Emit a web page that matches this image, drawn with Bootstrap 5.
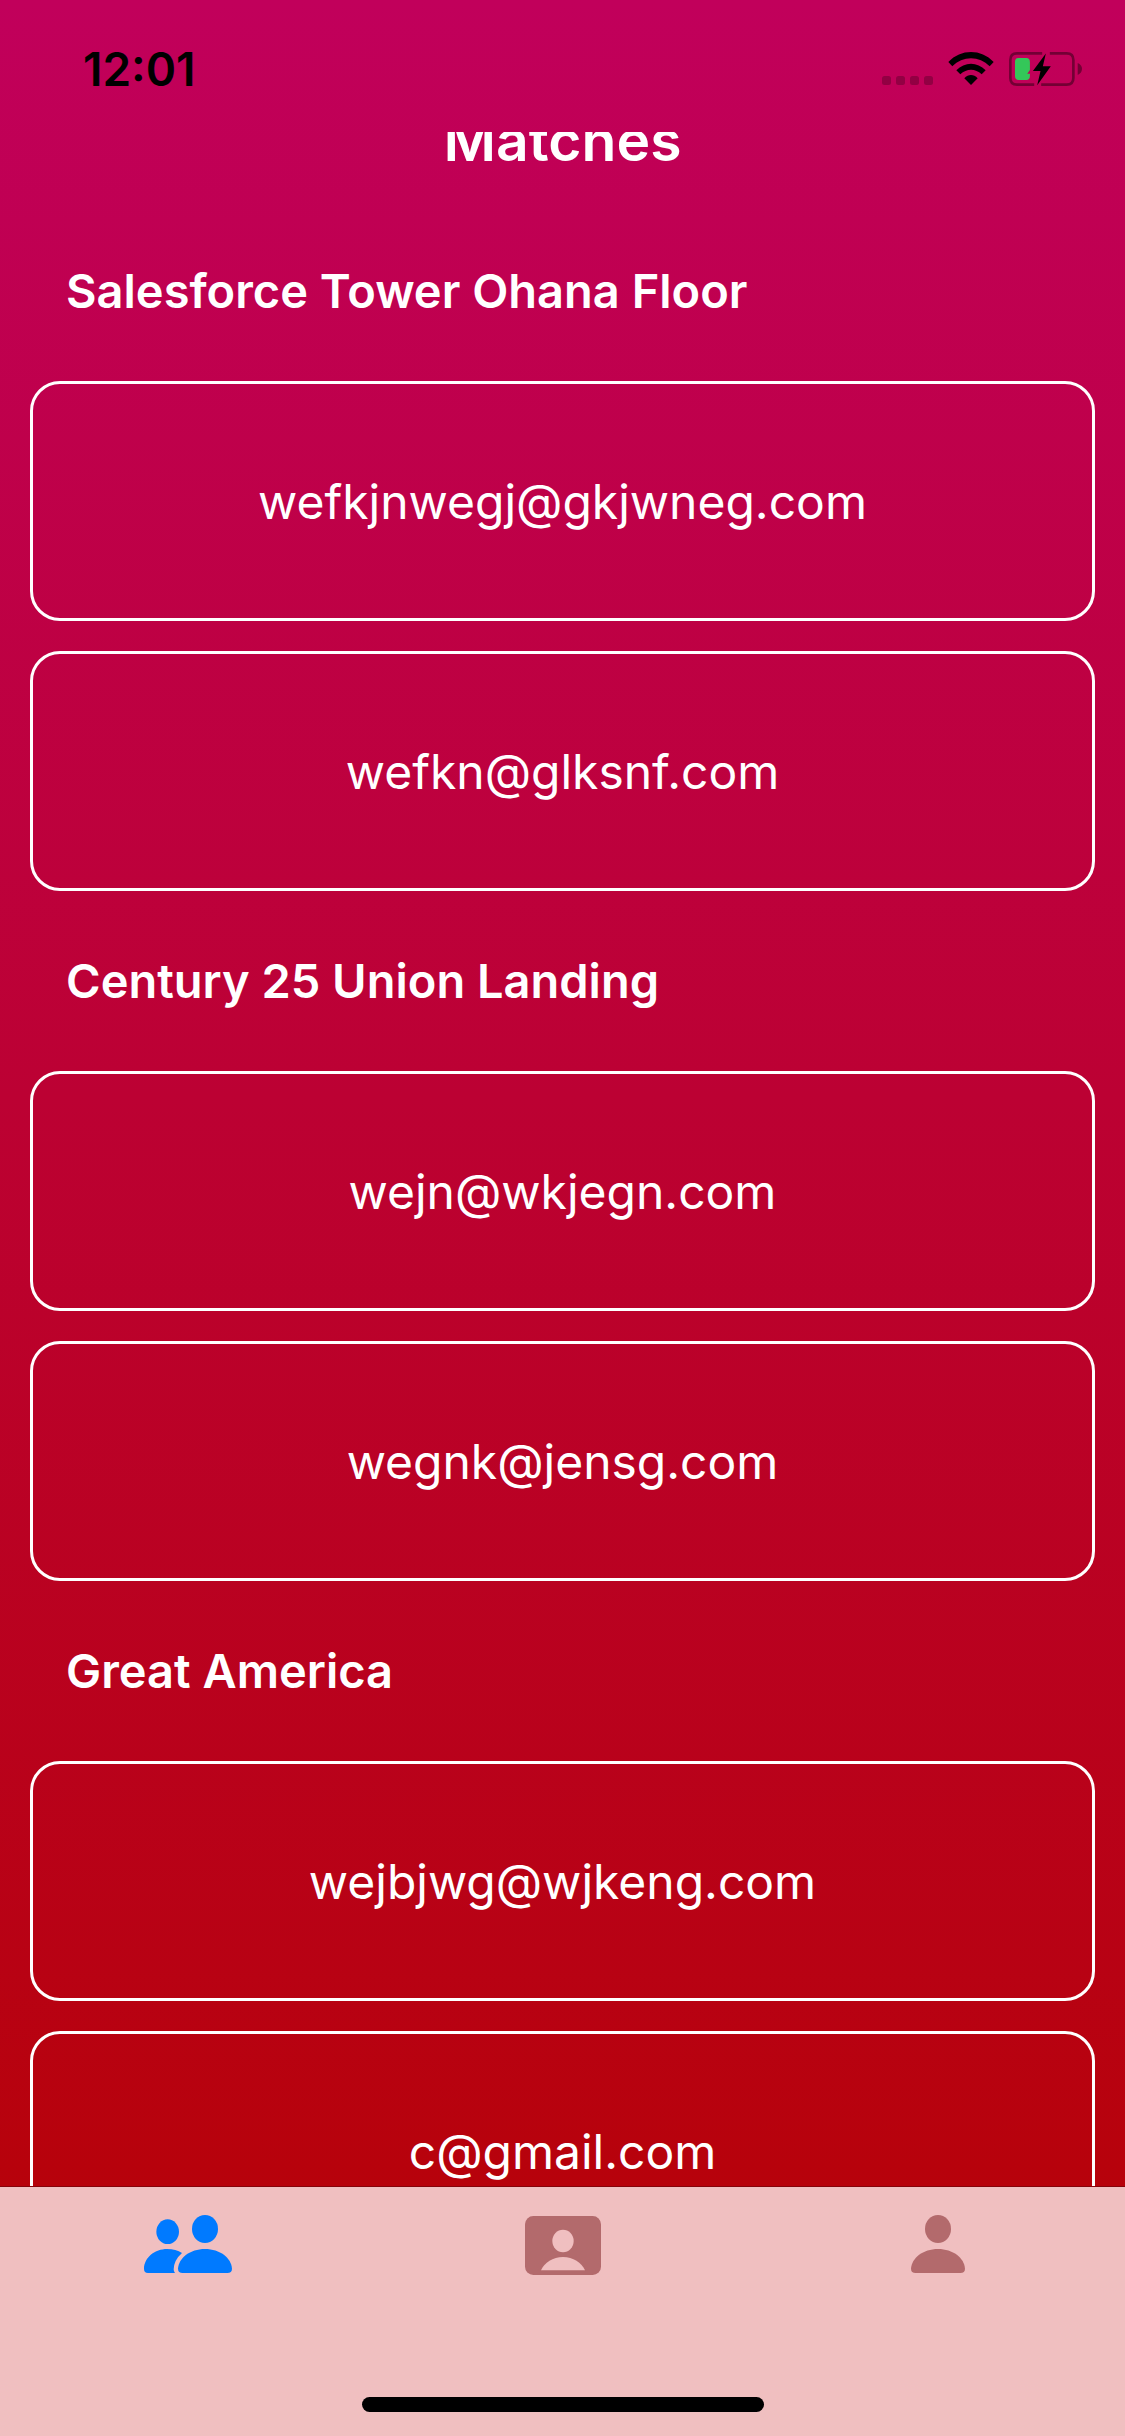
<!DOCTYPE html>
<html lang="en">
<head>
<meta charset="utf-8">
<meta name="viewport" content="width=device-width, initial-scale=1">
<title>Matches</title>
<link href="https://cdn.jsdelivr.net/npm/bootstrap@5.3.0/dist/css/bootstrap.min.css" rel="stylesheet">
<style>
  body { font-family: Inter, "Liberation Sans", sans-serif; background: #b7030a; }
  .app-screen { background: linear-gradient(180deg, #c1005b 0%, #b7020b 90%); }
  .status-bar { height: 132px; padding: 6px 43px 0 83px; }
  .status-time { font-size: 46px; font-weight: 600; line-height: 54px; }
  .status-icons { gap: 15px; height: 34px; }
  .match-list { min-height: 0; }
  .page-title { font-size: 57px; font-weight: 600; line-height: 120px; margin: -51px 0 0; }
  .place-name { font-size: 47px; font-weight: 600; line-height: 60px; padding: 60px 36px; margin: 0; }
  .match-stack { gap: 30px; }
  .match-card { min-height: 240px; border: 3px solid #fff; border-radius: 30px; background: transparent; color: #fff; font-size: 48px; line-height: 60px; padding-top: 2px; }
  .list-inset { padding: 0 30px; }
  .tab-bar { height: 250px; background: #f0bfc0; border-top: 1px solid #850309; padding-bottom: 24px; }
  .tab-link { color: #b36a6c; padding: 28px 0; }
  .tab-link.active { color: #007aff; }
  .home-indicator { width: 402px; height: 15px; background: #000; }
</style>
<script src="https://cdn.jsdelivr.net/npm/bootstrap@5.3.0/dist/js/bootstrap.bundle.min.js"></script>
</head>
<body>
<div class="app-screen vh-100 d-flex flex-column overflow-hidden">
  <header class="status-bar flex-shrink-0 d-flex justify-content-between align-items-center text-black">
    <span class="status-time">12:01</span>
    <div class="status-icons d-flex align-items-end">
      <svg width="51" height="10" viewBox="0 0 51 10" fill="#000" fill-opacity=".24" aria-label="No signal">
        <rect width="9" height="9" rx="2.5"/><rect x="14" width="9" height="9" rx="2.5"/><rect x="28" width="9" height="9" rx="2.5"/><rect x="42" width="9" height="9" rx="2.5"/>
      </svg>
      <svg width="46" height="34" viewBox="295 66 136 102" aria-label="Wi-Fi">
        <path d="M295 96C333 56 393 56 431 96L419 109C388 77 338 77 307 109Z"/>
        <path d="M319 121C344 95 382 95 407 121L395 133C376 115 350 115 331 133Z"/>
        <path d="M343 145C355 132 371 132 383 145L363 165Z"/>
      </svg>
      <svg width="73" height="34" viewBox="477 66 220 102" aria-label="Battery charging">
        <path d="M577 70H501Q481 70 481 90V144Q481 164 501 164H553M600 70H651Q671 70 671 90V144Q671 164 651 164H574" fill="none" stroke="#000" stroke-opacity=".4" stroke-width="8"/>
        <path d="M684 99Q697 105 697 117T684 135Z" fill-opacity=".4"/>
        <path d="M506 84H529Q540 84 540 96V120L532 131H540V138Q540 150 529 150H506Q495 150 495 138V96Q495 84 506 84Z" fill="#34c759"/>
        <path d="M588 70L549 123H572L562 166L603 109H579Z"/>
      </svg>
    </div>
  </header>

  <main class="match-list flex-grow-1 overflow-hidden list-inset text-white">
    <h1 class="page-title text-center">Matches</h1>
    <section>
      <h2 class="place-name">Salesforce Tower Ohana Floor</h2>
      <div class="match-stack d-flex flex-column">
        <div class="card match-card justify-content-center align-items-center">wefkjnwegj@gkjwneg.com</div>
        <div class="card match-card justify-content-center align-items-center">wefkn@glksnf.com</div>
      </div>
    </section>
    <section>
      <h2 class="place-name">Century 25 Union Landing</h2>
      <div class="match-stack d-flex flex-column">
        <div class="card match-card justify-content-center align-items-center">wejn@wkjegn.com</div>
        <div class="card match-card justify-content-center align-items-center">wegnk@jensg.com</div>
      </div>
    </section>
    <section>
      <h2 class="place-name">Great America</h2>
      <div class="match-stack d-flex flex-column">
        <div class="card match-card justify-content-center align-items-center">wejbjwg@wjkeng.com</div>
        <div class="card match-card justify-content-center align-items-center">c@gmail.com</div>
      </div>
    </section>
  </main>

  <footer class="tab-bar flex-shrink-0 d-flex flex-column justify-content-between align-items-center">
    <nav class="d-flex w-100">
      <a class="tab-link active col-4 d-flex justify-content-center" href="#matches" aria-label="Matches" aria-current="page">
        <svg width="88" height="58" viewBox="129 105 264 174" fill="currentColor">
          <ellipse cx="200" cy="155" rx="34" ry="37"/>
          <ellipse cx="312" cy="147" rx="39" ry="42"/>
          <path d="M141 279Q129 279 129 266C130 232 162 207 198 207Q225 207 243 219Q219 240 218 268Q218 275 222 279Z"/>
          <path d="M245 279Q231 279 231 266C233 234 267 207 312 207S391 234 393 266Q393 279 379 279Z"/>
        </svg>
      </a>
      <a class="tab-link col-4 d-flex justify-content-center" href="#cards" aria-label="Cards">
        <svg width="76" height="60" viewBox="102 105 228 180">
          <rect x="102" y="108" width="228" height="177" rx="25" fill="currentColor"/>
          <g fill="#f0bfc0"><ellipse cx="216" cy="183" rx="32" ry="34"/><path d="M150 271C160 248 186 231 216 231S272 248 282 271Z"/></g>
        </svg>
      </a>
      <a class="tab-link col-4 d-flex justify-content-center" href="#profile" aria-label="Profile">
        <svg width="54" height="58" viewBox="120 105 162 174" fill="currentColor">
          <ellipse cx="201" cy="147" rx="39" ry="42"/>
          <path d="M134 279Q120 279 120 266C122 234 156 207 201 207S280 234 282 266Q282 279 268 279Z"/>
        </svg>
      </a>
    </nav>
    <div class="home-indicator rounded-pill"></div>
  </footer>
</div>
</body>
</html>
